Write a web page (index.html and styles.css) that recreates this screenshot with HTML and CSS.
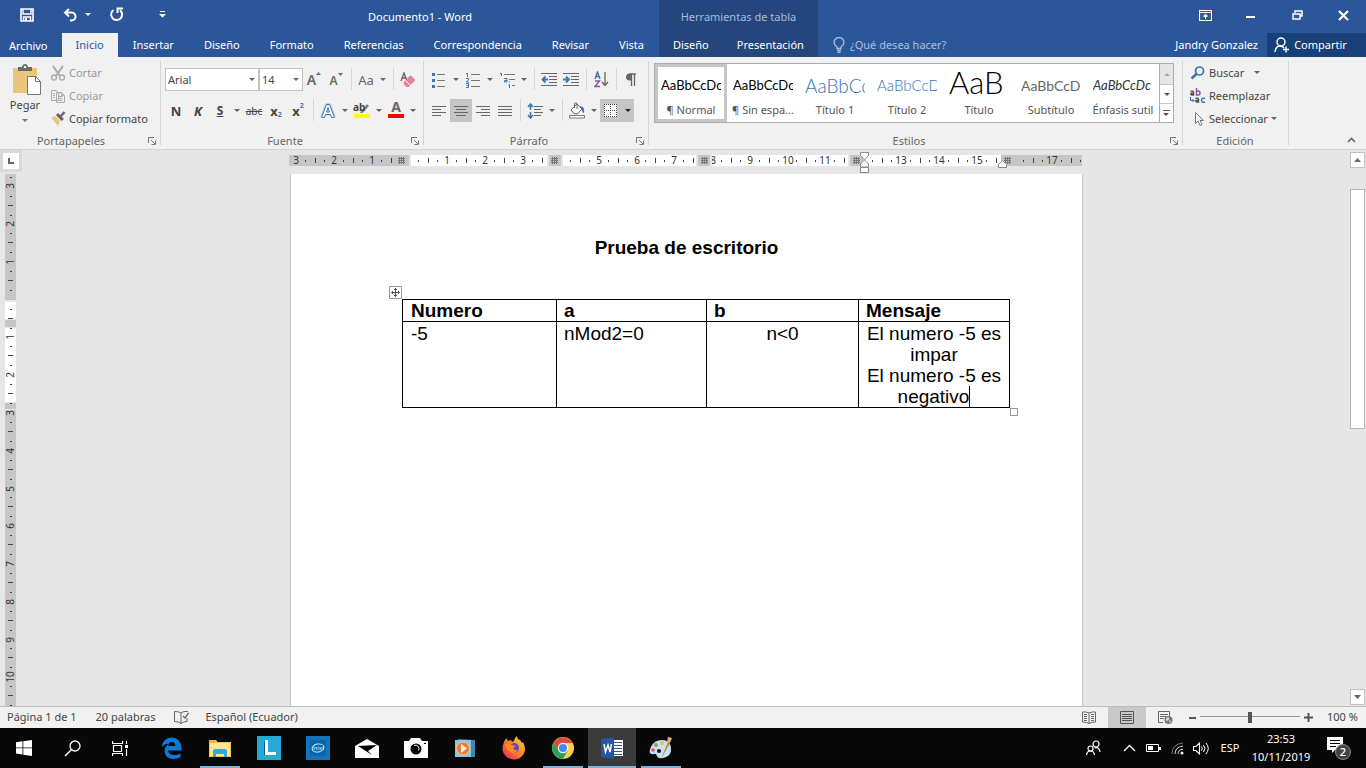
FILE: index.html
```html
<!DOCTYPE html>
<html lang="es">
<head>
<meta charset="utf-8">
<title>Documento1 - Word</title>
<link rel="stylesheet" href="styles.css">
</head>
<body>
<header class="titlebar">
  <div class="main-part">
    <div class="quick">
      <button aria-label="Guardar"><svg width="14" height="14" viewBox="0 0 14 14"><path d="M1 1h12v12H1z" fill="none" stroke="#fff" stroke-width="1.6"/><path d="M3 1v5h8V1M3.500 13V9h7v4" fill="none" stroke="#fff" stroke-width="1.400"/><path d="M5 10h2v3H5z" fill="#fff"/></svg></button>
      <button aria-label="Deshacer"><svg width="15" height="14" viewBox="0 0 15 14"><path d="M6 1 2 4.500 6 8.500M2 4.500h6.500a4 4 0 0 1 0 8H7" fill="none" stroke="#fff" stroke-width="2"/></svg></button>
      <button class="drop" aria-label="Opciones de deshacer"></button>
      <button aria-label="Rehacer"><svg width="15" height="15" viewBox="0 0 15 15"><path d="M4.500 3A5.500 5.500 0 1 0 11 3.200M8.500 6V1.500H14" fill="none" stroke="#fff" stroke-width="2"/></svg></button>
      <button class="customize" aria-label="Personalizar"><svg width="7" height="7" viewBox="0 0 7 7"><path d="M1 0h5v1H1zM0 3h7L3.500 6.500z" fill="#fff"/></svg></button>
      <span class="doc-name">Documento1 - Word</span>
    </div>
    <nav class="tabs">
      <a class="file" href="#">Archivo</a><a class="on" href="#">Inicio</a><a href="#">Insertar</a><a href="#">Diseño</a><a href="#">Formato</a><a href="#">Referencias</a><a href="#">Correspondencia</a><a href="#">Revisar</a><a href="#">Vista</a>
    </nav>
  </div>
  <div class="context">
    <div class="context-name">Herramientas de tabla</div>
    <nav class="tabs"><a href="#">Diseño</a><a href="#">Presentación</a></nav>
  </div>
  <div class="right-part">
    <div class="window-buttons">
      <button aria-label="Opciones de cinta"><svg width="13" height="11" viewBox="0 0 13 11"><path d="M.5.5h12v10H.5zM.5 2.500h12M6.500 9V4.500M4.500 6.500l2-2 2 2" fill="none" stroke="#fff" stroke-width="1.200"/></svg></button>
      <button aria-label="Minimizar"><svg width="10" height="11" viewBox="0 0 10 11"><path d="M0 6h9v2H0z" fill="#fff"/></svg></button>
      <button aria-label="Restaurar"><svg width="11" height="11" viewBox="0 0 11 11"><path d="M1 4h7v5H1zM3 3V1h7v5H8.500" fill="none" stroke="#fff" stroke-width="1.500"/></svg></button>
      <button aria-label="Cerrar"><svg width="11" height="11" viewBox="0 0 11 11"><path d="m1 1 9 9M10 1l-9 9" stroke="#fff" stroke-width="2.200"/></svg></button>
    </div>
    <div class="account">
      <label class="tell"><svg width="12" height="16" viewBox="0 0 12 16"><path d="M4 11.500V10C2 8.500 1 7 1 5.500a5 5 0 0 1 10 0C11 7 10 8.500 8 10v1.500zM4 13.500h4M4.500 15.300h3" fill="none" stroke="#a9bfe0" stroke-width="1.300"/></svg><input type="text" placeholder="¿Qué desea hacer?" aria-label="¿Qué desea hacer?"></label>
      <a class="user" href="#">Jandry Gonzalez</a>
      <button class="share"><svg width="16" height="16" viewBox="0 0 16 16"><circle cx="7" cy="5" r="4" fill="none" stroke="#fff" stroke-width="1.500"/><path d="M1 15c.5-4 2-6 5-6 2 0 3 .6 4 2M12 9.500v6M9 12.500h6" fill="none" stroke="#fff" stroke-width="1.500"/></svg>Compartir</button>
    </div>
  </div>
</header>

<section class="ribbon">
  <div class="group clipboard">
    <div class="group-body">
      <button class="paste"><svg width="30" height="32" viewBox="0 0 30 32"><path d="M1 4h24v25H1z" fill="#ebc57c"/><path d="M6 3h4c0-4 6-4 6 0h4v4H6z" fill="#6b6b6b"/><circle cx="13" cy="3" r="1.300" fill="#eee"/><path d="M15.500 12.500h8l5 5v13h-13z" fill="#fff" stroke="#777"/><path d="M23.500 12.500v5h5" fill="none" stroke="#777"/></svg>Pegar<i class="arrow"></i></button>
      <div class="stack">
        <button class="off"><svg width="16" height="16" viewBox="0 0 16 16"><path d="m3 1 7 10M13 1 6 11" stroke="#aaa" stroke-width="2"/><circle cx="4" cy="12.500" r="2.500" fill="none" stroke="#aaa" stroke-width="1.300"/><circle cx="12" cy="12.500" r="2.500" fill="none" stroke="#aaa" stroke-width="1.300"/></svg>Cortar</button>
        <button class="off"><svg width="16" height="16" viewBox="0 0 16 16"><path d="M1.500 2.500h5l2 2v8h-7zM6.500 4.500h5l3 3v7h-8z" fill="#f1f1f1" stroke="#aaa"/><path d="M3 5.500h2M3 7.500h2M3 9.500h2M8.500 8.500h4M8.500 10.500h4M8.500 12.500h4M11.500 4.500v3h3" fill="none" stroke="#aaa"/></svg>Copiar</button>
        <button><svg width="16" height="16" viewBox="0 0 16 16"><path d="M1 6.500 5.500 5l4.500 5-2 5z" fill="#ebc57c"/><path d="m6 4 2-2 6 6-2.500 2z" fill="#666"/><path d="m10 6 4.500-5" stroke="#666" stroke-width="2.500"/></svg>Copiar formato</button>
      </div>
    </div>
    <div class="group-name">Portapapeles<svg class="launch" width="8" height="8" viewBox="0 0 8 8"><path d="M.5 6V.5H6M3 3l4 4M7.500 3.500v4h-4" fill="none" stroke="#777"/></svg></div>
  </div>

  <div class="group font">
    <div class="group-body rows">
      <div class="row">
        <span class="combo family"><select aria-label="Fuente"><option>Arial</option></select></span>
        <span class="combo size"><select aria-label="Tamaño"><option>14</option></select></span>
        <button class="tool grow" aria-label="Aumentar">A<svg width="5" height="4" viewBox="0 0 5 4"><path d="M0 3 2.500 0 5 3z" fill="#3f76b0"/></svg></button>
        <button class="tool grow less" aria-label="Disminuir">A<svg width="5" height="4" viewBox="0 0 5 4"><path d="M0 0 2.500 3 5 0z" fill="#3f76b0"/></svg></button>
        <i class="sep"></i>
        <button class="tool case">Aa</button><button class="drop" aria-label="Mayúsculas"></button>
        <i class="sep"></i>
        <button class="tool" aria-label="Borrar formato"><svg width="16" height="16" viewBox="0 0 16 16"><path d="m1 9 3-8 3 8M2 6h4" fill="none" stroke="#666" stroke-width="1.400"/><path d="m3.500 10.500 6-6.500q1-1 2 0l3 3q1 1 0 2L8.500 15H6.500l-3-3z" fill="#e48296"/><path d="m5.500 8.500 5 5" stroke="#fff"/></svg></button>
      </div>
      <div class="row">
        <button class="tool bold">N</button><button class="tool ital">K</button><button class="tool under">S</button><button class="drop" aria-label="Subrayado"></button>
        <button class="tool strike">abc</button>
        <button class="tool script low">x<small>2</small></button><button class="tool script high">x<small>2</small></button>
        <i class="sep"></i>
        <button class="tool" aria-label="Efectos de texto"><svg width="16" height="16" viewBox="0 0 16 16"><path d="m2 14 5-12h2l5 12M4 10.500h8" fill="none" stroke="#b6cfea" stroke-width="4" stroke-linejoin="round"/><path d="M1.500 14.500 6.500 1.500h3l5 13h-3l-1-3h-5l-1 3zM6.500 9h3L8 4.500z" fill="#fff" stroke="#4678b4"/></svg></button><button class="drop" aria-label="Efectos"></button>
        <button class="tool mark"><b>ab</b><svg width="16" height="15" viewBox="0 0 16 15"><path d="m8 9 6-7" stroke="#777" stroke-width="2.500"/><path d="m6 10 1-2 2 2z" fill="#777"/><path d="M0 11h16v4H0z" fill="#ff0"/></svg></button><button class="drop" aria-label="Color de resaltado"></button>
        <button class="tool ink">A</button><button class="drop" aria-label="Color de fuente"></button>
      </div>
    </div>
    <div class="group-name">Fuente<svg class="launch" width="8" height="8" viewBox="0 0 8 8"><path d="M.5 6V.5H6M3 3l4 4M7.500 3.500v4h-4" fill="none" stroke="#777"/></svg></div>
  </div>

  <div class="group para">
    <div class="group-body rows">
      <div class="row">
        <button class="tool" aria-label="Viñetas"><svg width="16" height="16" viewBox="0 0 16 16"><path d="M1 1h3v3H1zM1 7h3v3H1zM1 13h3v3H1z" fill="#3f76b0"/><path d="M6 2.500h8M6 8.500h8M6 14.500h8" stroke="#777"/></svg></button><button class="drop" aria-label="Más viñetas"></button>
        <button class="tool" aria-label="Numeración"><svg width="16" height="16" viewBox="0 0 16 16"><path d="M1 1.500h1.500V5M1 6.500h2.500V8L1.500 9.500V10H4M1 11.500h2.500v4H1M1.500 13.500h2" fill="none" stroke="#3f76b0"/><path d="M6 2.500h9M6 8.500h9M6 14.500h9" stroke="#777"/></svg></button><button class="drop" aria-label="Más numeración"></button>
        <button class="tool" aria-label="Lista multinivel"><svg width="17" height="16" viewBox="0 0 17 16"><path d="M1 1.500h1.500V4M5 6.500h3V10H5.500V8.500H8M10.500 9.500v1M9.500 12.500h1V16" fill="none" stroke="#3f76b0"/><path d="M5 2.500h11M10 7.500h6M13 13.500h3" stroke="#777"/></svg></button><button class="drop" aria-label="Más niveles"></button>
        <i class="sep"></i>
        <button class="tool" aria-label="Disminuir sangría"><svg width="16" height="15" viewBox="0 0 16 15"><path d="M0 1.500h16M8 4.500h8M8 7.500h8M8 10.500h8M0 13.500h16" stroke="#666"/><path d="M7 7.500H2M4.500 4.500 1.500 7.500 4.500 10.500" fill="none" stroke="#3f76b0" stroke-width="1.800"/></svg></button>
        <button class="tool" aria-label="Aumentar sangría"><svg width="16" height="15" viewBox="0 0 16 15"><path d="M0 1.500h16M8 4.500h8M8 7.500h8M8 10.500h8M0 13.500h16" stroke="#666"/><path d="M0 7.500h5M3 4.500l3 3-3 3" fill="none" stroke="#3f76b0" stroke-width="1.800"/></svg></button>
        <i class="sep"></i>
        <button class="tool" aria-label="Ordenar"><svg width="15" height="17" viewBox="0 0 15 17"><path d="m1 8 2.500-7L6 8M2 5.500h3" fill="none" stroke="#3f76b0" stroke-width="1.400"/><path d="M1 10h4.500L1 15.500h5" fill="none" stroke="#8a56ae" stroke-width="1.400"/><path d="M11 1v13M8 11l3 3.500 3-3.500" fill="none" stroke="#666" stroke-width="1.300"/></svg></button>
        <i class="sep"></i>
        <button class="tool" aria-label="Mostrar todo"><svg width="12" height="14" viewBox="0 0 12 14"><path d="M11 1H5M6.500 1v12M9.500 1v12" fill="none" stroke="#666" stroke-width="1.300"/><path d="M6.500.500H4.500a3.500 3.500 0 0 0 0 7h2z" fill="#666"/></svg></button>
      </div>
      <div class="row">
        <button class="tool" aria-label="Izquierda"><svg width="14" height="14" viewBox="0 0 14 14"><path d="M0 2.500h14M0 5.500h9M0 8.500h14M0 11.500h9" stroke="#666"/></svg></button>
        <button class="tool active" aria-label="Centrar"><svg width="14" height="14" viewBox="0 0 14 14"><path d="M0 2.500h14M2 5.500h10M0 8.500h14M2 11.500h10" stroke="#666"/></svg></button>
        <button class="tool" aria-label="Derecha"><svg width="14" height="14" viewBox="0 0 14 14"><path d="M0 2.500h14M5 5.500h9M0 8.500h14M5 11.500h9" stroke="#666"/></svg></button>
        <button class="tool" aria-label="Justificar"><svg width="14" height="14" viewBox="0 0 14 14"><path d="M0 2.500h14M0 5.500h14M0 8.500h14M0 11.500h14" stroke="#666"/></svg></button>
        <i class="sep"></i>
        <button class="tool" aria-label="Interlineado"><svg width="16" height="16" viewBox="0 0 16 16"><path d="M3.500 2v5M3.500 9v5M1 4l2.500-3L6 4M1 12l2.500 3L6 12" fill="none" stroke="#3f76b0" stroke-width="1.500"/><path d="M7 3.500h9M7 6.500h7M7 9.500h9M7 12.500h7" stroke="#666"/></svg></button><button class="drop" aria-label="Más interlineado"></button>
        <i class="sep"></i>
        <button class="tool" aria-label="Sombreado"><svg width="18" height="17" viewBox="0 0 18 17"><path d="M3 8 9 2l5 5-5 5-3-.5z" fill="#fff" stroke="#666"/><path d="M6.500 6V1.500Q8 0 9 1.500V7" fill="none" stroke="#666"/><path d="M12 4q5 0 4 7-2 0-2-4z" fill="#3f76b0"/><path d="M1.500 13.500h15v2.500h-15z" fill="#fff" stroke="#777"/></svg></button><button class="drop" aria-label="Más sombreado"></button>
        <button class="tool active" aria-label="Bordes"><svg width="14" height="14" viewBox="0 0 14 14"><path d="M0 0h13v13H0z" fill="#fff"/><path d="M0 .5h13M0 6.500h13M0 12.500h13M.5 0v13M6.500 0v13M12.500 0v13" stroke="#444" stroke-dasharray="1 1"/></svg></button><button class="drop active" aria-label="Más bordes"></button>
      </div>
    </div>
    <div class="group-name">Párrafo<svg class="launch" width="8" height="8" viewBox="0 0 8 8"><path d="M.5 6V.5H6M3 3l4 4M7.500 3.500v4h-4" fill="none" stroke="#777"/></svg></div>
  </div>

  <div class="group styles">
    <div class="group-body">
      <div class="gallery">
        <button class="style chosen"><span class="sample">AaBbCcDc</span>¶ Normal</button>
        <button class="style"><span class="sample">AaBbCcDc</span>¶ Sin espa...</button>
        <button class="style"><span class="sample head1">AaBbCc</span>Título 1</button>
        <button class="style"><span class="sample head2">AaBbCcD</span>Título 2</button>
        <button class="style"><span class="sample big">AaB</span>Título</button>
        <button class="style"><span class="sample sub">AaBbCcD</span>Subtítulo</button>
        <button class="style"><span class="sample em">AaBbCcDc</span>Énfasis sutil</button>
        <div class="spin">
          <button class="dim" aria-label="Arriba"><svg width="6" height="3" viewBox="0 0 6 3"><path d="M0 3 3 0l3 3z" fill="#aaa"/></svg></button>
          <button aria-label="Abajo"><svg width="6" height="3" viewBox="0 0 6 3"><path d="M0 0h6L3 3z" fill="#555"/></svg></button>
          <button aria-label="Más estilos"><svg width="7" height="6" viewBox="0 0 7 6"><path d="M0 0h7v1H0zM0 3h6L3 6z" fill="#555"/></svg></button>
        </div>
      </div>
    </div>
    <div class="group-name">Estilos<svg class="launch" width="8" height="8" viewBox="0 0 8 8"><path d="M.5 6V.5H6M3 3l4 4M7.500 3.500v4h-4" fill="none" stroke="#777"/></svg></div>
  </div>

  <div class="group edit">
    <div class="group-body">
      <div class="stack">
        <button><svg width="16" height="14" viewBox="0 0 16 14"><circle cx="9.500" cy="5" r="4" fill="none" stroke="#3f76b0" stroke-width="1.700"/><path d="m6.500 8-5 4.500" stroke="#3f76b0" stroke-width="2.500"/></svg>Buscar<i class="arrow spaced"></i></button>
        <button><svg width="16" height="16" viewBox="0 0 16 16"><g fill="none" stroke-width="1.500"><path d="M.5 3.500q3-1 3 1V7H2q-1.500 0-1-1.500h2.500" stroke="#555"/><path d="M6.500 0v7H8q2 0 2-2T8 3H6.500" stroke="#8a56ae"/><path d="M5.500 10.500q3-1 3 1V14H7q-1.500 0-1-1.500h2.500" stroke="#555"/><path d="M15 10.500q-3.500-1-3.500 1.800T15 14" stroke="#3f76b0"/></g><path d="M.5 9v3.500H4M2.500 11l1.500 1.500L2.500 14" fill="none" stroke="#3f76b0"/></svg>Reemplazar</button>
        <button><svg width="16" height="16" viewBox="0 0 16 16"><path d="M5.500 1.500v11l2.500-2.500 2 4.500 2-1-2-4h3.500z" fill="#fff" stroke="#777"/></svg>Seleccionar<i class="arrow"></i></button>
      </div>
    </div>
    <div class="group-name">Edición</div>
  </div>
  <button class="collapse" aria-label="Contraer la cinta"><svg width="9" height="6" viewBox="0 0 9 6"><path d="m1 5 3.500-3.500L8 5" fill="none" stroke="#666" stroke-width="1.700"/></svg></button>
</section>

<main class="workspace">
  <div class="side">
    <button class="tabstop" aria-label="Tabulación"><svg width="6" height="6" viewBox="0 0 6 6"><path d="M1 0v5h5" fill="none" stroke="#666" stroke-width="2"/></svg></button>
    <svg class="vruler" width="11" height="532" viewBox="0 0 11 532">
      <defs><path id="vt" d="M5 9h2v1H5zM3 18h5v1H3zM5 28h2v1H5z" fill="#444"/></defs>
      <path d="M0 0h11v532H0z" fill="#c6c6c6"/><path d="M0 128h11v17H0zM0 154h11v74H0z" fill="#fff"/><path d="M0 126h11v2H0zM0 145h11v1H0zM0 153h11v1H0zM0 228h11v1H0zM0 235h11v1H0z" fill="#e6e6e6"/>
      <use href="#vt" y="-25"/><use href="#vt" y="13"/><use href="#vt" y="50"/><use href="#vt" y="88"/><use href="#vt" y="126"/><use href="#vt" y="163"/><use href="#vt" y="201"/><use href="#vt" y="239"/><use href="#vt" y="277"/><use href="#vt" y="314"/><use href="#vt" y="352"/><use href="#vt" y="390"/><use href="#vt" y="428"/><use href="#vt" y="465"/><use href="#vt" y="503"/>
      <g class="marks"><text transform="translate(9 12) rotate(-90)">3</text><text transform="translate(9 50) rotate(-90)">2</text><text transform="translate(9 88) rotate(-90)">1</text><text transform="translate(9 163) rotate(-90)">1</text><text transform="translate(9 201) rotate(-90)">2</text><text transform="translate(9 239) rotate(-90)">3</text><text transform="translate(9 277) rotate(-90)">4</text><text transform="translate(9 315) rotate(-90)">5</text><text transform="translate(9 352) rotate(-90)">6</text><text transform="translate(9 390) rotate(-90)">7</text><text transform="translate(9 428) rotate(-90)">8</text><text transform="translate(9 466) rotate(-90)">9</text><text transform="translate(9 503) rotate(-90)">10</text></g>
    </svg>
  </div>
  <div class="canvas">
    <svg class="hruler" width="795" height="24" viewBox="0 0 795 24">
      <defs><path id="ht" d="M9 10h1v2H9zM19 8h1v5h-1zM28 10h1v2h-1z" fill="#444"/>
      <path id="mesh" d="M0 1h7v1H0zM0 3h7v1H0zM0 5h7v1H0zM1 0h1v7H1zM3 0h1v7H3zM5 0h1v7H5z" fill="#777"/></defs>
      <path d="M0 5h793v11H0z" fill="#c6c6c6"/><path d="M122 5h136v11H122zM274 5h133v11H274zM423 5h136v11H423zM574 5h138v11H574z" fill="#fff"/>
      <use href="#ht" x="7"/><use href="#ht" x="45"/><use href="#ht" x="83"/><use href="#ht" x="120"/><use href="#ht" x="158"/><use href="#ht" x="196"/><use href="#ht" x="234"/><use href="#ht" x="272"/><use href="#ht" x="310"/><use href="#ht" x="347"/><use href="#ht" x="385"/><use href="#ht" x="423"/><use href="#ht" x="461"/><use href="#ht" x="498"/><use href="#ht" x="536"/><use href="#ht" x="574"/><use href="#ht" x="612"/><use href="#ht" x="650"/><use href="#ht" x="688"/><use href="#ht" x="725"/><use href="#ht" x="763"/>
      <g class="marks"><text x="7" y="14">3</text><text x="45" y="14">2</text><text x="83" y="14">1</text><text x="158" y="14">1</text><text x="196" y="14">2</text><text x="234" y="14">3</text><text x="310" y="14">5</text><text x="348" y="14">6</text><text x="385" y="14">7</text><text x="424" y="14">8</text><text x="461" y="14">9</text><text x="499" y="14">10</text><text x="536" y="14">11</text><text x="612" y="14">13</text><text x="650" y="14">14</text><text x="688" y="14">15</text><text x="763" y="14">17</text></g>
      <path d="M120 5h2v11h-2zM258 5h2v11h-2zM272 5h2v11h-2zM407 5h2v11h-2zM421 5h2v11h-2zM559 5h2v11h-2z" fill="#e6e6e6"/>
      <path d="M109 5h11v11h-11zM260 5h12v11h-12zM409 5h12v11h-12zM561 5h12v11h-12zM712 5h12v11h-12z" fill="#c6c6c6"/>
      <use href="#mesh" x="109" y="7"/><use href="#mesh" x="262" y="7"/><use href="#mesh" x="412" y="7"/><use href="#mesh" x="564" y="7"/><use href="#mesh" x="715" y="7"/>
      <path d="M571.500 2.500h8v3l-4 4.500 4 4v3h-8v-3l4-4-4-4.500zM571.500 17.500h8v5h-8zM709.500 17.500v-3l4-4 4 4v3z" fill="#fff" stroke="#888"/>
    </svg>
    <article class="paper">
      <h1>Prueba de escritorio</h1>
      <div class="table-box">
        <svg class="mover" width="13" height="13" viewBox="0 0 13 13"><path d="M.5.5h12v12H.5z" fill="#fff" stroke="#999"/><path d="M6.500 2.500v8M2.500 6.500h8M5 4l1.500-1.500L8 4M5 9l1.500 1.500L8 9M4 5 2.500 6.500 4 8M9 5l1.500 1.500L9 8" fill="none" stroke="#555"/></svg>
        <table>
          <thead><tr><th>Numero</th><th>a</th><th>b</th><th>Mensaje</th></tr></thead>
          <tbody><tr><td>-5</td><td>nMod2=0</td><td class="mid">n&lt;0</td><td class="mid">El numero -5 es impar<br>El numero -5 es negativo<span class="caret"></span></td></tr></tbody>
        </table>
        <i class="sizer"></i>
      </div>
    </article>
  </div>
  <div class="scroll">
    <button aria-label="Subir"><svg width="7" height="4" viewBox="0 0 7 4"><path d="M0 4 3.500 0 7 4z" fill="#666"/></svg></button>
    <div class="track"><div class="thumb"></div></div>
    <button aria-label="Bajar"><svg width="7" height="4" viewBox="0 0 7 4"><path d="M0 0h7L3.500 4z" fill="#666"/></svg></button>
  </div>
</main>

<footer class="status">
  <span>Página 1 de 1</span><span>20 palabras</span>
  <svg width="15" height="13" viewBox="0 0 15 13"><path d="M7 2v10.500M7 2Q5 .5.500.500v10Q5 10.500 7 12.500 9 10.500 13 10.500V7M7 2q2-1.500 4-1.500h3" fill="none" stroke="#666"/><path d="m9 5 2 2 3.500-5" fill="none" stroke="#666" stroke-width="1.400"/></svg>
  <span>Español (Ecuador)</span>
  <div class="views">
    <button aria-label="Modo de lectura"><svg width="14" height="13" viewBox="0 0 14 13"><path d="M7 2v11M7 2Q4 .5.500 1v10q4 0 6.500 1.500Q10 11 13.500 11V1Q10 .5 7 2M2 3.500h3M2 5.500h3M2 7.500h3M2 9.500h3M9 3.500h3M9 5.500h3M9 7.500h3M9 9.500h3" fill="none" stroke="#666"/></svg></button>
    <button class="on" aria-label="Diseño de impresión"><svg width="14" height="13" viewBox="0 0 14 13"><path d="M.5.5h13v12H.5zM2 3.500h10M2 5.500h10M2 7.500h10M2 9.500h10" fill="none" stroke="#555"/></svg></button>
    <button aria-label="Diseño web"><svg width="15" height="13" viewBox="0 0 15 13"><path d="M5 11.500H.5V.5h11V5M2 3.500h8M2 5.500h6M2 7.500h4" fill="none" stroke="#666"/><circle cx="10.500" cy="9" r="4" fill="#777"/><path d="M8 8q2-3 3-1T8 10zM11 9l2 1-1 2z" fill="#ddd"/></svg></button>
  </div>
  <button class="zoom-btn" aria-label="Alejar"><svg width="7" height="9" viewBox="0 0 7 9"><path d="M0 4h7v2H0z" fill="#555"/></svg></button>
  <input class="zoom" type="range" min="0" max="200" value="100" aria-label="Zoom">
  <button class="zoom-btn" aria-label="Acercar"><svg width="9" height="9" viewBox="0 0 9 9"><path d="M0 3.500h9v2H0zM3.500 0h2v9h-2z" fill="#555"/></svg></button>
  <span class="percent">100 %</span>
</footer>

<footer class="taskbar">
  <button aria-label="Inicio"><svg width="16" height="16" viewBox="0 0 16 16"><path d="m0 2.300 6.500-1v6.200H0zM7.300 1.200 16 0v7.500H7.300zM0 8.300h6.500v6.200L0 13.600zM7.300 8.300H16V16l-8.700-1.300z" fill="#fff"/></svg></button>
  <button aria-label="Buscar"><svg width="17" height="17" viewBox="0 0 17 17"><circle cx="11" cy="6" r="5" fill="none" stroke="#fff" stroke-width="1.300"/><path d="M7.300 9.700 1 16" stroke="#fff" stroke-width="1.500"/></svg></button>
  <button class="last-system" aria-label="Vista de tareas"><svg width="17" height="15" viewBox="0 0 17 15"><path d="M.5 0v2.500h10V0M.5 15v-2.500h10V15M1.500 4.500h8v6h-8zM14.500 0v3M14.500 8v7" fill="none" stroke="#fff" stroke-width="1.200"/><path d="M13 4h3v3h-3z" fill="#fff"/></svg></button>
  <button aria-label="Edge"><svg width="21" height="22" viewBox="0 0 21 22"><path d="M.5 10Q2 1 10.500.5 20 .5 20.500 11.500v2H7q.5 4.500 6.500 4.500 3 0 6-1.500V20Q17 22 12 22 4 21.500 3.500 14 4 9 8 6.500 4 6.500.500 10zM7.300 9h7q0-4-3.500-4T7.300 9z" fill="#0a7ad8"/></svg></button>
  <button class="open" aria-label="Explorador"><svg width="22" height="19" viewBox="0 0 22 19"><path d="M0 1h7l1.500 2H22v15H0z" fill="#f4c64f"/><path d="M1 4h20v13H1z" fill="#fde793"/><path d="M0 1h6v3H0z" fill="#f0b735"/><path d="M4 18v-6q0-2 2-2h10q2 0 2 2v6h-3v-3H7v3z" fill="#39a7d9"/></svg></button>
  <button aria-label="Lenovo"><svg width="24" height="24" viewBox="0 0 24 24"><path d="M0 0h24v24H0z" fill="#25a9d5"/><path d="M7 4v15h4v-4z" fill="#0a5a8b"/><path d="M8 4h3v12h8v3H8z" fill="#fff"/></svg></button>
  <button aria-label="Intel"><svg width="24" height="24" viewBox="0 0 24 24"><path d="M0 0h24v24H0z" fill="#1674bd"/><path d="M4 4h16v16H4z" fill="#0867b0"/><ellipse cx="12" cy="12" rx="6" ry="4" fill="none" stroke="#c5e6fa" transform="rotate(-12 12 12)"/><text class="intel" x="12" y="14">intel</text></svg></button>
  <button aria-label="Correo"><svg width="24" height="19" viewBox="0 0 24 19"><path d="M0 7 12 0l12 7v12H0z" fill="#fff"/><path d="m3 7 19-1-9 6 4 4z" fill="#000"/></svg></button>
  <button aria-label="Cámara"><svg width="24" height="20" viewBox="0 0 24 20"><path d="M0 3h5l2-3h9l2 3h6v17H0z" fill="#fff"/><circle cx="12" cy="11" r="5.500" fill="#000"/><path d="M10 7.500a3.500 3.500 0 0 1 4.500 5" fill="none" stroke="#fff"/><path d="M20 5h2v1h-2z" fill="#000"/></svg></button>
  <button aria-label="Reproductor"><svg width="21" height="19" viewBox="0 0 21 19"><path d="m3 0 17 1v17H3z" fill="#3c87ac"/><path d="M0 1h16v17H0z" fill="#8cc5df"/><circle cx="8" cy="9.500" r="6.500" fill="#ed7d27" stroke="#f7c7a0"/><path d="m6 5 6 4.500L6 14z" fill="#fff"/></svg></button>
  <button aria-label="Firefox"><svg width="24" height="24" viewBox="0 0 24 24"><defs><linearGradient id="fire" x1="1" x2="0" y2="1"><stop offset="0" stop-color="#ffe13c"/><stop offset=".45" stop-color="#ff8a23"/><stop offset="1" stop-color="#ed1765"/></linearGradient></defs><path d="M2 6 4 2l2 3 3-1 1 2 2-1Q12 2 15 0q0 3 3 4l2 3 1-1q4 8 0 13-4 5-10 4.500Q2 22 .5 14 .5 9 2 6z" fill="url(#fire)"/><circle cx="12" cy="12" r="5" fill="#6842ba"/><path d="M3 8q4-2 7 1l4 1-3 2q1 3 5 2-3 5-8 2-4-3-5-8z" fill="#ff8a23"/></svg></button>
  <button class="open" aria-label="Chrome"><svg width="22" height="22" viewBox="0 0 22 22"><circle cx="11" cy="11" r="11" fill="#ffd047"/><path d="m6.500 13.500-5-8A11 11 0 0 0 11 22l5-8.500z" fill="#27a25b"/><path d="M1.500 5.500A11 11 0 0 1 20.500 6H11l-5 7z" fill="#de4c40"/><circle cx="11" cy="11" r="5.200" fill="#fff"/><circle cx="11" cy="11" r="4.100" fill="#4688f1"/></svg></button>
  <button class="open current" aria-label="Word"><svg width="24" height="22" viewBox="0 0 24 22"><path d="M12 3h11v16H12z" fill="#fff"/><path d="M14 5.500h8M14 8.500h8M14 11.500h8M14 14.500h8M14 17.500h8" stroke="#2b579a"/><path d="m1 2 13-2v22L1 20z" fill="#2456a4"/><path d="m4 7 1.500 8L8 8l2 7 1.500-8" fill="none" stroke="#fff" stroke-width="1.500"/></svg></button>
  <button class="open" aria-label="Paint"><svg width="24" height="24" viewBox="0 0 24 24"><path d="M2 11Q5 4 13 4t9 8-8 10Q9 23 8 20t-3-2-4-1q-1-2 1-6z" fill="#c8e1ef"/><circle cx="7" cy="9" r="2" fill="#6bb15c"/><circle cx="4" cy="14" r="1.800" fill="#dd564b"/><circle cx="13" cy="7" r="2" fill="#eebf37"/><circle cx="10" cy="15" r="2" fill="#111"/><path d="m12 23 7-17 2 1z" fill="#c77c35"/><path d="m18 6 1-5 4 1-2 5z" fill="#e1b178"/></svg></button>
  <div class="tray">
    <button class="people" aria-label="Contactos"><svg width="15" height="16" viewBox="0 0 15 16"><circle cx="10" cy="4" r="3" fill="none" stroke="#fff" stroke-width="1.200"/><circle cx="4.500" cy="8.500" r="2.500" fill="none" stroke="#fff" stroke-width="1.200"/><path d="M.7 15q0-4 3.800-4t3.800 4M8.500 8q5-1.500 5.500 4" fill="none" stroke="#fff" stroke-width="1.200"/></svg></button>
    <button aria-label="Iconos ocultos"><svg width="13" height="8" viewBox="0 0 13 8"><path d="m1 7 5.500-5.500L12 7" fill="none" stroke="#fff" stroke-width="1.300"/></svg></button>
    <button aria-label="Batería"><svg width="15" height="10" viewBox="0 0 15 10"><path d="M.5 1.500h12v7H.5z" fill="none" stroke="#fff"/><path d="M2 3h5v4H2zM13 4h2v3h-2z" fill="#fff"/></svg></button>
    <button aria-label="Red"><svg width="13" height="13" viewBox="0 0 13 13"><path d="M1 12Q1 2 12 1" fill="none" stroke="#777"/><path d="M4 12q0-7 8-8M7 12q0-4 5-5" fill="none" stroke="#ddd"/><circle cx="11" cy="11" r="1.500" fill="#fff"/></svg></button>
    <button aria-label="Volumen"><svg width="17" height="13" viewBox="0 0 17 13"><path d="M.5 4.500H3L6.500 1v11L3 8.500H.5z" fill="none" stroke="#fff" stroke-width="1.100"/><path d="M8.500 4.500q1.500 2 0 4M10.500 3q3 3.500 0 7M13 1q4.500 5.500 0 11" fill="none" stroke="#fff"/></svg></button>
    <span class="lang">ESP</span>
    <span class="clock">23:53<br>10/11/2019</span>
    <button class="notes" aria-label="Notificaciones"><svg width="26" height="26" viewBox="0 0 26 26"><path d="M0 2h16v13H8l-3 3v-3H0z" fill="#fff"/><path d="M3 5.500h10M3 8.500h10M3 11.500h6" stroke="#000"/><circle cx="16" cy="17" r="7.500" fill="#444" stroke="#888"/><text class="badge" x="16" y="21">2</text></svg></button>
  </div>
</footer>
</body>
</html>
```
FILE: styles.css
```css
* { box-sizing: border-box; }
body {
  margin: 0;
  height: 100vh;
  display: flex;
  flex-direction: column;
  overflow: hidden;
  background: #e6e6e6;
  color: #444;
  font: 11px/16px "Noto Sans", "Open Sans", sans-serif;
}
button, input, select { font: inherit; color: inherit; }
button { display: flex; align-items: center; justify-content: center; padding: 0; border: 0; background: none; white-space: nowrap; }
a { color: inherit; text-decoration: none; }
svg { flex: none; display: block; }

/* Title bar and tabs */
.titlebar { display: flex; background: #2b579a; color: #fff; }
.quick { display: flex; align-items: center; height: 33px; padding: 0 0 4px 16px; }
.quick button { width: 22px; height: 22px; }
.quick button + button { margin-left: 21px; }
.quick button + .drop { width: 12px; margin-left: 1px; color: #fff; }
.quick .drop + button { margin-left: 11px; }
.quick button + .customize { margin-left: 24px; }
.doc-name { flex: 1; padding: 4px 0 0 8px; text-align: center; }
.tabs { display: flex; height: 24px; }
.tabs a { padding: 4px 15px 0; white-space: nowrap; }
.tabs .file { padding: 5px 14px 0 9px; }
.tabs .on { padding: 4px 14px 0; background: #f1f1f1; color: #2b579a; }
.context { background: #24467c; }
.context .tabs a { padding: 4px 14px 0; }
.context-name { height: 33px; padding-top: 9px; text-align: center; color: #a6bbdc; }
.right-part { flex: 1; }
.window-buttons { display: flex; justify-content: flex-end; height: 33px; }
.window-buttons button { width: 46px; height: 30px; }
.account { display: flex; align-items: center; height: 24px; }
.tell { flex: 1; display: flex; align-items: center; gap: 5px; padding-left: 15px; }
.tell input { width: 140px; padding: 0; border: 0; background: none; outline: none; }
.tell input::placeholder { color: #a9bfe0; opacity: 1; }
.user { padding-right: 9px; }
.share { width: 99px; height: 24px; padding-right: 12px; gap: 4px; background: #173f78; }

/* Ribbon */
.ribbon { display: flex; height: 93px; padding: 4px 0; background: #f1f1f1; border-bottom: 1px solid #d2d2d2; }
.group { display: flex; flex-direction: column; border-right: 1px solid #d5d5d5; }
.group-body { flex: 1; display: flex; }
.group-name { position: relative; height: 16px; margin-bottom: -4px; text-align: center; color: #666; }
.launch { position: absolute; right: 4px; top: 4px; }
.clipboard { width: 161px; }
.clipboard .group-name { padding-right: 18px; }
.font { width: 263px; padding-left: 4px; }
.font .group-name, .para .group-name, .styles .group-name { padding-right: 18px; }
.para { width: 225px; padding-left: 4px; }
.styles { width: 534px; padding-left: 5px; }
.edit { width: 106px; padding-left: 7px; }
.edit .group-name { padding-right: 8px; }
.arrow, .drop::before { width: 0; height: 0; border: 3px solid transparent; border-top-color: currentColor; border-bottom: 0; }
.drop { width: 12px; height: 23px; color: #666; }
.drop::before { content: ""; }
.paste { flex-direction: column; justify-content: flex-start; width: 50px; padding: 3px 0 0; }
.paste svg { margin: 0 0 1px 4px; }
.paste .arrow { margin-top: 6px; color: #777; }
.stack { display: flex; flex-direction: column; }
.stack button { height: 23px; justify-content: flex-start; gap: 3px; }
.stack .off { color: #999; }
.stack .arrow { color: #666; }
.stack .spaced { margin-left: 7px; }
.rows { flex-direction: column; gap: 8px; padding-top: 7px; }
.row { display: flex; height: 23px; }
.tool { width: 22px; height: 23px; }
.active { background: #c5c5c5; }
.drop.active { color: #222; }
.sep { width: 8px; height: 22px; background: linear-gradient(#d5d5d5, #d5d5d5) 4px 0 / 1px 100% no-repeat; }
.combo { position: relative; }
.combo select { width: 100%; height: 23px; padding: 0 2px; border: 1px solid #c2c2c2; border-radius: 0; background: #fff; appearance: none; }
.combo::after { content: ""; position: absolute; right: 4px; top: 10px; border: 3px solid transparent; border-top-color: #666; border-bottom: 0; pointer-events: none; }
.family { width: 94px; }
.size { width: 44px; }
.grow { align-items: flex-start; padding-top: 4px; font-size: 14px; font-weight: 600; color: #666; }
.less { padding-top: 5px; font-size: 12px; }
.case { font-size: 13px; color: #666; }
.bold { font-weight: 700; font-size: 13px; }
.ital { font: italic 700 13px/16px "Noto Sans", sans-serif; }
.under { font-size: 12px; font-weight: 700; text-decoration: underline; }
.strike { font-size: 10px; text-decoration: line-through; }
.script { font-size: 13px; font-weight: 700; }
.script small { font-size: 7px; color: #3f76b0; }
.low small { padding-top: 8px; }
.high small { padding-bottom: 10px; }
.mark { position: relative; font-size: 10px; }
.mark b { position: absolute; left: 2px; top: 0; }
.mark svg { margin-bottom: 1px; }
.ink { height: 20px; font-size: 14px; line-height: 16px; font-weight: 700; color: #666; background: linear-gradient(#f00, #f00) 3px 15px / 16px 4px no-repeat; align-items: flex-start; }
.gallery { display: flex; height: 60px; margin-top: 2px; border: 1px solid #ababab; background: #fff; }
.style { flex-direction: column; width: 72px; height: 58px; padding-top: 8px; overflow: hidden; color: #555; justify-content: flex-start; }
.style.chosen { padding-top: 5px; border: 3px solid #c6c6c6; }
.sample { display: flex; align-items: center; width: 60px; height: 27px; margin-bottom: 3px; overflow: hidden; color: #000; font: 13px/27px Lato, sans-serif; }
.head1 { font-size: 19px; font-weight: 300; color: #2e74b5; }
.head2 { font-size: 15px; font-weight: 300; color: #2e74b5; }
.big { font-size: 31px; line-height: 20px; font-weight: 300; align-items: flex-start; }
.sub { font-size: 14px; color: #666; }
.em { font-style: italic; color: #333; }
.spin { width: 14px; border-left: 1px solid #ababab; }
.spin button { width: 13px; height: 19px; border-top: 1px solid #c6c6c6; }
.spin .dim { height: 20px; border: 0; background: #e6e6e6; }
.collapse { margin-left: auto; align-self: flex-end; width: 20px; height: 10px; margin-right: 5px; }

/* Document area */
.workspace { flex: 1; min-height: 0; display: grid; grid-template-columns: 23px 1fr 16px; border-bottom: 1px solid #bdbdbd; }
.side { overflow: hidden; }
.tabstop { width: 22px; height: 22px; border: 3px solid #d9d9d9; background: #fdfdfd; }
.vruler { margin: 2px 0 0 5px; }
.marks { font: 10px "Noto Sans", sans-serif; fill: #333; text-anchor: middle; }
.canvas { display: flex; flex-direction: column; align-items: center; overflow: hidden; }
.paper { flex: 1; width: 793px; padding: 63px 0 0; border: 1px solid #c8c8c8; border-width: 0 1px; background: #fff; color: #000; font: 19px/21px "Liberation Sans", Arial, sans-serif; }
.paper h1 { margin: 0 0 40px; font-size: 19px; line-height: 22px; text-align: center; }
.table-box { position: relative; margin: 0 72px 0 111px; }
.table-box table { width: 100%; table-layout: fixed; border-collapse: collapse; }
.table-box th, .table-box td { padding: 0 7px; border: 1px solid #000; text-align: left; vertical-align: top; }
.table-box th:first-child { width: 154px; }
.table-box th:nth-child(2) { width: 150px; }
.table-box th:nth-child(3) { width: 152px; }
.table-box th:first-child, .table-box td:first-child { padding-left: 8px; }
.table-box td { padding-top: 1px; }
.table-box td.mid { padding: 1px 6px 0; text-align: center; }
.caret { border-left: 1px solid #000; }
.mover { position: absolute; left: -13px; top: -13px; }
.sizer { position: absolute; right: -8px; bottom: -8px; width: 8px; height: 8px; border: 1px solid #999; background: #fff; }
.scroll { display: flex; flex-direction: column; padding: 2px 1px 1px 0; }
.scroll button { width: 15px; height: 16px; border: 1px solid #c0c0c0; background: #fff; }
.track { flex: 1; padding-top: 21px; }
.thumb { width: 15px; height: 48%; border: 1px solid #b5b5b5; background: #fff; }

/* Status bar */
.status { display: flex; align-items: center; height: 21px; padding: 0 0 1px 7px; background: #f1f1f1; }
.status span + span, .status > svg { margin-left: 19px; }
.status svg + span { margin-left: 16px; }
.views { display: flex; margin-left: auto; }
.views button { width: 38px; height: 21px; }
.views .on { background: #c9c9c9; }
.zoom-btn { width: 14px; height: 20px; }
.views + .zoom-btn { margin-left: 1px; }
.zoom { width: 100px; height: 20px; margin: 0 1px; appearance: none; background: linear-gradient(#999, #999) 0 9px / 100% 1px no-repeat; }
.zoom::-webkit-slider-thumb { appearance: none; width: 4px; height: 11px; background: #555; }
.status .percent { width: 51px; margin-left: 0; padding-left: 12px; white-space: nowrap; }

/* Taskbar */
.taskbar { display: flex; height: 40px; background: #080808; color: #fff; }
.taskbar > button { width: 48px; height: 40px; margin-right: 1px; }
.taskbar > button:nth-child(-n+2) { margin-right: 0; }
.taskbar > .last-system { margin-right: 3px; }
.taskbar .open { background: linear-gradient(#76b2e2, #76b2e2) 4px 38px / 40px 2px no-repeat; }
.taskbar .current { background: linear-gradient(#76b2e2, #76b2e2) 0 38px / 48px 2px no-repeat, #3a3a3a; }
.intel { font: italic 6px "Open Sans", sans-serif; fill: #d7effc; text-anchor: middle; }
.tray { display: flex; align-items: center; margin-left: auto; }
.tray button { width: 24px; height: 40px; }
.tray .people { margin-right: 12px; }
.lang { width: 34px; text-align: center; }
.clock { width: 68px; line-height: 18px; text-align: center; }
.tray .notes { width: 50px; margin-right: 1px; }
.badge { font: 600 11px "Open Sans", sans-serif; fill: #fff; text-anchor: middle; }
```
